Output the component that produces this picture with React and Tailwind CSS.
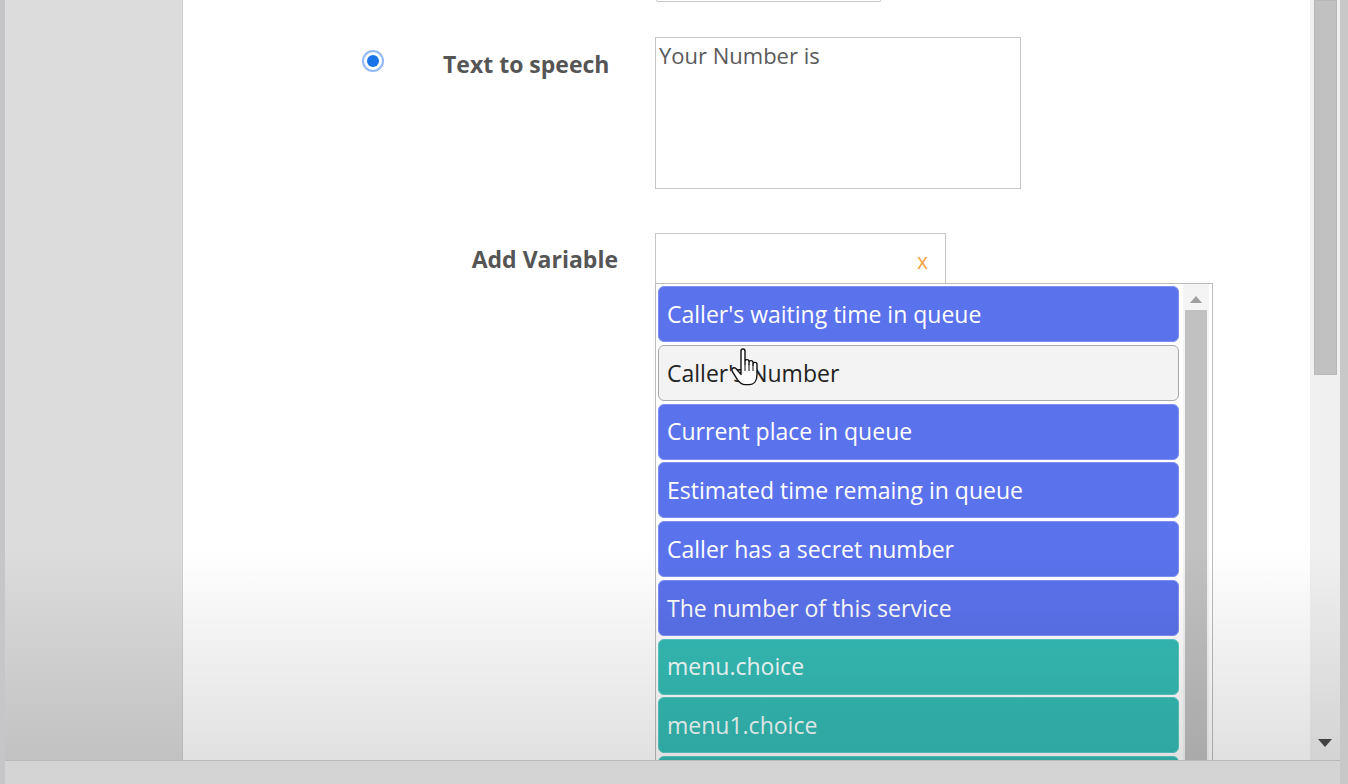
import React from "react";

const items = [
  { label: "Caller's waiting time in queue", kind: "blue" },
  { label: "Caller's Number", kind: "gray" },
  { label: "Current place in queue", kind: "blue" },
  { label: "Estimated time remaing in queue", kind: "blue" },
  { label: "Caller has a secret number", kind: "blue" },
  { label: "The number of this service", kind: "blue" },
  { label: "menu.choice", kind: "teal" },
  { label: "menu1.choice", kind: "teal" },
  { label: "", kind: "teal" },
];

function Item({ label, kind }) {
  const cls =
    kind === "blue"
      ? "bg-[#5a72ec] text-white border-[#7d90f0]"
      : kind === "teal"
      ? "bg-[#35bcb6] text-[#f4fffe] border-[#5ccbc6]"
      : "bg-[#f3f3f3] text-[#222] border-[#a9a9a9]";
  return (
    <div
      className={`relative h-[56px] w-[521px] shrink-0 rounded-[6px] border flex items-center pl-[8px] text-[23px] ${cls}`}
    >
      {label}
      {kind === "gray" && (
        <svg
          className="absolute left-[70px] top-[2px]"
          width="32"
          height="40"
          viewBox="0 0 16 20"
        >
          <path
            d="M6 1.5C6 .9 6.4.5 7 .5S8 .9 8 1.5V8V6.8C8 6.2 8.4 5.8 9 5.8S10 6.2 10 6.8V8.2V7.3C10 6.7 10.4 6.3 11 6.3S12 6.7 12 7.3V8.7V8.2C12 7.6 12.4 7.2 13 7.2S14 7.6 14 8.2V13.2C14 16.3 12.5 18.3 10 18.3H8.2C6.2 18.3 5.2 17.3 4.2 15.8L1.7 11.8C1.2 11.1 1.4 10.3 2 10 2.6 9.7 3.3 9.9 3.7 10.5L6 13.2Z"
            fill="#fff"
            stroke="#111"
            strokeWidth="0.7"
            strokeLinejoin="round"
          />
          <path d="M8 8V11.5M10 8.2V11.5M12 8.7V11.5" stroke="#111" strokeWidth="0.5" />
        </svg>
      )}
    </div>
  );
}

export default function App() {
  return (
    <div
      className="relative flex h-[784px] w-[1348px] overflow-hidden bg-[#d2d2d2]"
      style={{ fontFamily: '"Open Sans", "Noto Sans", sans-serif' }}
    >
      {/* left stripe */}
      <div className="w-[5px] shrink-0 bg-[#c6c6c8]" />

      <div className="flex w-[1335px] shrink-0 flex-col">
        <div className="relative flex h-[760px] shrink-0">
          {/* left panel */}
          <div className="w-[178px] shrink-0 border-r border-[#cfcfcf] bg-[#dcdcdc]" />

          {/* main */}
          <div className="relative w-[1127px] shrink-0 overflow-hidden bg-white">
            {/* partial box at top */}
            <div className="ml-[473px] h-[2px] w-[225px] rounded-b-[4px] border border-t-0 border-[#c8c8c8]" />

            {/* Text to speech row */}
            <div className="mt-[35px] flex items-start">
              <div className="flex w-[472px] shrink-0 items-start">
                <div className="ml-[179px] mt-[13px] flex h-[22px] w-[22px] items-center justify-center rounded-full border-[2px] border-[#8fb8f4] bg-white">
                  <div className="h-[12px] w-[12px] rounded-full bg-[#1a73e8]" />
                </div>
                <div className="ml-[59px] mt-[11px] text-[23px] leading-[32px] font-bold text-[#555]">
                  Text to speech
                </div>
              </div>
              <div className="h-[152px] w-[366px] shrink-0 border border-[#c6c6c6] pl-[3px] pt-[1px] text-[22px] leading-[32px] text-[#5a5a5a]">
                Your Number is
              </div>
            </div>

            {/* Add Variable row */}
            <div className="mt-[44px] flex items-start">
              <div className="w-[472px] shrink-0 pr-[37px] pt-[10px] text-right text-[23px] leading-[32px] font-bold text-[#555]">
                Add Variable
              </div>
              <div className="flex flex-col">
                <div className="flex h-[50px] w-[291px] items-center justify-end border border-b-0 border-[#c6c6c6] pr-[17px] pt-[6px] text-[21px] text-[#f0a342]">
                  x
                </div>
                {/* dropdown list */}
                <div className="flex h-[480px] w-[558px] border border-[#bdbdbd] bg-white">
                  <div className="flex flex-col gap-[2.75px] pl-[2px] pt-[2px]">
                    {items.map((it, i) => (
                      <Item key={i} {...it} />
                    ))}
                  </div>
                  <div className="ml-[4px] flex w-[26px] flex-col items-center bg-[#f4f4f4]">
                    <svg className="mt-[12px]" width="12" height="7" viewBox="0 0 12 7">
                      <path d="M6 0L12 7H0Z" fill="#a0a0a0" />
                    </svg>
                    <div className="mt-[7px] w-[22px] flex-1 bg-[#c1c1c1]" />
                  </div>
                </div>
              </div>
            </div>
          </div>

          {/* main scrollbar */}
          <div className="relative flex w-[30px] shrink-0 flex-col items-center bg-[#f0f0f0]">
            <div className="mt-0 h-[375px] w-[23px] border border-[#b8b8b8] bg-[#c1c1c1]" />
            <svg className="absolute bottom-[13px]" width="14" height="8" viewBox="0 0 14 8">
              <path d="M0 0H14L7 8Z" fill="#4a4a4a" />
            </svg>
          </div>

          {/* bottom shading */}
          <div className="pointer-events-none absolute inset-0 bg-linear-to-b from-transparent from-[72%] to-black/[0.12]" />
        </div>

        {/* bottom bar */}
        <div className="h-[24px] shrink-0 border-t border-[#b9b9b9] bg-[#d4d4d4]" />
      </div>

      {/* right stripe */}
      <div className="w-[8px] shrink-0 bg-[#c8c8c8]" />
    </div>
  );
}
